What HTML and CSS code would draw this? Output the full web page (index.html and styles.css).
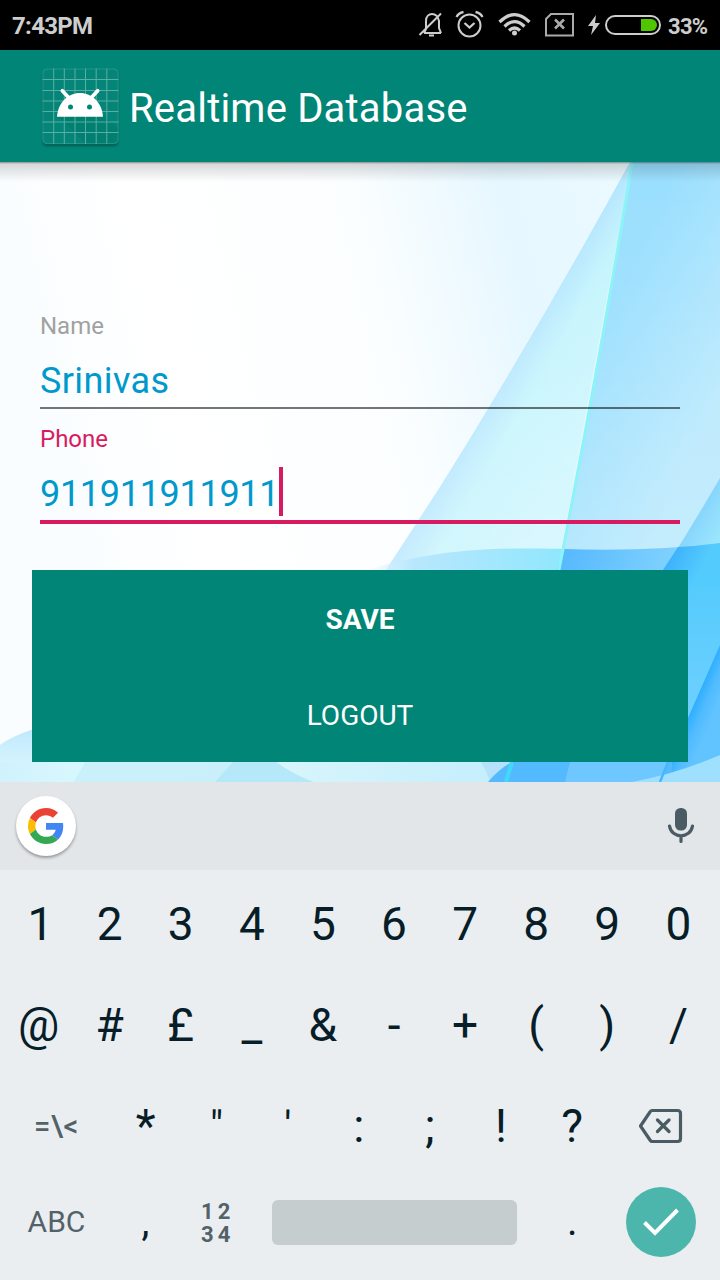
FILE: index.html
```html
<!DOCTYPE html>
<html lang="en">
<head>
<meta charset="utf-8">
<title>Realtime Database</title>
<link rel="stylesheet" href="styles.css">
</head>
<body>
<div class="status">
  <span class="clock">7:43PM</span>
  <svg class="status-icons" width="244" height="50" viewBox="418 0 244 50" fill="none" stroke="#cdcdcd" stroke-width="2">
    <path d="M424 33h17M424 33l2-4v-8c0-5 3-7 6-7s6 2 7 7v7l2 5M419.500 35L441 13.500M429 35.500h5"/>
    <circle cx="469.500" cy="25.500" r="11"/>
    <path d="M456.500 17q2-4 7-5M482.500 17q-2-4-7-5M464.500 23l5 4.500 5-4.500" stroke-width="2.300"/>
    <g stroke-width="3.200"><path d="M499.500 22q15-15 30 0M504.500 26.500q10-10 20 0M509 30.500q5.500-5 11 0"/></g>
    <circle cx="514.500" cy="33" r="2.500" fill="#cdcdcd" stroke="none"/>
    <path d="M551 14h22v21.500h-27V19z" stroke="#aaa"/>
    <path d="M555 19.500l9 9M564 19.500l-9 9" stroke="#aaa" stroke-width="2.600"/>
    <path d="M596 15l-8 11h5l-2 9 9-12h-5z" fill="#cdcdcd" stroke="none"/>
    <rect x="606" y="16" width="54" height="18" rx="9"/>
    <path d="M641 19h10a6 6 0 0 1 0 12h-10z" fill="#4fc700" stroke="none"/>
  </svg>
  <span class="percent">33%</span>
</div>
<header class="appbar">
  <svg class="launcher" width="84" height="84" viewBox="38 65 84 84">
    <defs><clipPath id="tile"><rect x="42.500" y="68.500" width="76" height="75.500" rx="4"/></clipPath></defs>
    <rect class="tile-shadow" x="43" y="70" width="75" height="75" rx="4"/>
    <rect x="42.500" y="68.500" width="76" height="75.500" rx="4" fill="#048577"/>
    <path d="M58 116l28 28h32v-16l-15-13z" fill="#007a6c" opacity=".55" clip-path="url(#tile)"/>
    <path clip-path="url(#tile)" d="M53.700 68v76M64.300 68v76M75 68v76M85.500 68v76M96.200 68v76M106.800 68v76M42 79.500h77M42 90.500h77M42 101h77M42 111.500h77M42 122h77M42 132.500h77" stroke="#77bdb3" stroke-width="1" opacity=".75"/>
    <rect x="43" y="69" width="75" height="74.500" rx="4" fill="none" stroke="#58aaa0" stroke-width=".7" opacity=".6"/>
    <path d="M57 116.700c1-14 11-23.700 23-23.700s22 9.700 23 23.700z" fill="#fff"/>
    <path d="M62.300 90.800l7 7.500M97.700 90.800l-7 7.500" stroke="#fff" stroke-width="3.700" stroke-linecap="round"/>
    <circle cx="70.500" cy="107" r="2.500" fill="#008577"/><circle cx="89.500" cy="107" r="2.500" fill="#008577"/>
  </svg>
  <h1 class="title">Realtime Database</h1>
</header>
<main class="screen">
  <svg class="wallpaper" width="720" height="620" viewBox="0 162 720 620">
    <defs>
      <linearGradient id="sky" x1="0" x2="1" y1=".2" y2="0"><stop offset="0" stop-color="#f9fdff"/><stop offset=".2" stop-color="#fff"/><stop offset=".5" stop-color="#fbfeff"/><stop offset=".7" stop-color="#e6f7ff"/><stop offset="1" stop-color="#eefcff"/></linearGradient>
      <linearGradient id="sail" gradientUnits="userSpaceOnUse" x1="495" y1="390" x2="590" y2="445"><stop offset="0" stop-color="#b4e5fe"/><stop offset=".3" stop-color="#c3f4fd"/><stop offset="1" stop-color="#ccf5fe"/></linearGradient>
      <linearGradient id="sailfade" x1="0" x2="0" y1="0" y2="1"><stop offset="0" stop-color="#fff" stop-opacity="0"/><stop offset="1" stop-color="#fff" stop-opacity=".3"/></linearGradient>
      <linearGradient id="right" gradientUnits="userSpaceOnUse" x1="595" y1="340" x2="720" y2="400"><stop offset="0" stop-color="#9adffe"/><stop offset="1" stop-color="#b9e9fd"/></linearGradient>
      <linearGradient id="rightfade" x1="0" x2="0" y1="0" y2="1"><stop offset="0" stop-color="#fff" stop-opacity="0"/><stop offset="1" stop-color="#fff" stop-opacity=".16"/></linearGradient>
      <linearGradient id="corner" gradientUnits="userSpaceOnUse" x1="692" y1="520" x2="720" y2="537"><stop offset="0" stop-color="#86d4fd"/><stop offset="1" stop-color="#9be6fd"/></linearGradient>
      <linearGradient id="wave" gradientUnits="userSpaceOnUse" x1="360" x2="570" y1="0" y2="0"><stop offset="0" stop-color="#eefaff" stop-opacity="0"/><stop offset=".25" stop-color="#b9e7fd"/><stop offset="1" stop-color="#8ee7fd"/></linearGradient>
      <linearGradient id="deep" gradientUnits="userSpaceOnUse" x1="550" y1="550" x2="670" y2="600"><stop offset="0" stop-color="#51b5fe"/><stop offset="1" stop-color="#84d5fe"/></linearGradient>
      <linearGradient id="edge" gradientUnits="userSpaceOnUse" x1="670" y1="557" x2="700" y2="572"><stop offset="0" stop-color="#3db2fc"/><stop offset="1" stop-color="#54cbfd"/></linearGradient>
      <linearGradient id="edgefade" x1="0" x2="0" y1="0" y2="1"><stop offset="0" stop-color="#7bd2ff" stop-opacity="0"/><stop offset="1" stop-color="#7bd2ff"/></linearGradient>
      <linearGradient id="fold" gradientUnits="userSpaceOnUse" x1="695" y1="702" x2="716" y2="711"><stop offset="0" stop-color="#2eaeff"/><stop offset=".45" stop-color="#50bbff"/><stop offset="1" stop-color="#62c4ff"/></linearGradient>
      <linearGradient id="foot" x1="0" x2="1" y1="0" y2="0"><stop offset="0" stop-color="#d0f2fd"/><stop offset=".16" stop-color="#d8f8ff"/><stop offset=".5" stop-color="#d9f6fd"/><stop offset="1" stop-color="#c4eefc"/></linearGradient>
      <linearGradient id="hill" x1="0" x2="0" y1="0" y2="1"><stop offset="0" stop-color="#bfe8fd"/><stop offset=".6" stop-color="#d4f4fd"/></linearGradient>
      <linearGradient id="barshade" x1="0" x2="0" y1="0" y2="1"><stop offset="0" stop-color="#000" stop-opacity=".45"/><stop offset=".1" stop-color="#000" stop-opacity=".15"/><stop offset="1" stop-color="#000" stop-opacity="0"/></linearGradient>
    </defs>
    <rect y="162" width="720" height="620" fill="url(#sky)"/>
    <path d="M630 162Q535 335 440 487L386 570l-30 60h190L632 162z" fill="url(#sail)"/>
    <path d="M630 162Q535 335 440 487L386 570l-30 60h190L632 162z" fill="url(#sailfade)"/>
    <path d="M632 162h88v620H500l58-212Q600 360 632 162z" fill="url(#right)"/>
    <path d="M632 162h88v400H560Q600 360 632 162z" fill="url(#rightfade)"/>
    <path d="M720 478q-26 45-56 92h56z" fill="url(#corner)"/>
    <path d="M360 572c60-18 110-26 210-23l-6 35H360z" fill="url(#wave)"/>
    <path d="M563 549q55 2 103-1l54-4v238H500z" fill="url(#deep)"/>
    <path d="M678 547q20-1 42-4v239h-65v-200z" fill="url(#edge)"/>
    <path d="M686 580h34v202h-34z" fill="url(#edgefade)"/>
    <path d="M720 645l-32 73-28 64h60z" fill="url(#fold)"/>
    <path d="M632 163Q600 360 559 570L500 782" fill="none" stroke="#8cf3f7" stroke-width="3"/>
    <path d="M0 745q12-9 34-16v53H0z" fill="url(#hill)"/>
    <path d="M0 762h510v20H0z" fill="url(#foot)"/>
    <path d="M85 762h150l-20 20H74z" fill="#c6edfa" opacity=".8"/>
    <path d="M233 762h43q18 13 38 20h-99z" fill="#b5e8f8"/>
    <path d="M481 762h31l-22 20q-2-8-9-20z" fill="#b6e1fa"/>
    <path d="M488 782q12-14 24-20h160v20z" fill="#53baff"/>
    <path d="M512 762l-6 20" stroke="#40daf7" stroke-width="4"/>
    <path d="M570 762h97l-4 20h-98z" fill="#7dcfff" opacity=".65"/>
    <path d="M632 782q44-8 88-27v27z" fill="#a0e0ff"/>
    <path d="M668 762l-8 20" stroke="#45b7ff" stroke-width="2.500"/>
    <rect y="162" width="720" height="20" fill="url(#barshade)"/>
  </svg>
  <div class="form">
    <label class="label">Name</label>
    <div class="field">Srinivas</div>
    <label class="label active">Phone</label>
    <div class="field focused"><span>911911911911</span><i class="caret"></i></div>
  </div>
  <div class="actions">
    <button class="button save">SAVE</button>
    <button class="button">LOGOUT</button>
  </div>
</main>
<section class="keyboard">
  <div class="suggestions">
    <div class="google">
      <svg width="36" height="36" viewBox="0 0 48 48"><path fill="#EA4335" d="M24 9.500c3.540 0 6.710 1.220 9.210 3.600l6.850-6.850C35.900 2.380 30.470 0 24 0 14.620 0 6.510 5.380 2.560 13.220l7.980 6.190C12.430 13.720 17.740 9.500 24 9.500z"/><path fill="#4285F4" d="M46.980 24.550c0-1.570-.15-3.090-.38-4.550H24v9.020h12.940c-.58 2.960-2.260 5.480-4.780 7.180l7.730 6c4.510-4.180 7.090-10.360 7.090-17.650z"/><path fill="#FBBC05" d="M10.530 28.590A14.500 14.500 0 0 1 9.770 24c0-1.600.27-3.140.76-4.590l-7.980-6.190A23.900 23.900 0 0 0 0 24c0 3.880.92 7.540 2.560 10.780z"/><path fill="#34A853" d="M24 48c6.480 0 11.930-2.130 15.890-5.810l-7.730-6c-2.150 1.450-4.920 2.300-8.160 2.300-6.260 0-11.570-4.220-13.470-9.910l-7.980 6.190C6.510 42.620 14.620 48 24 48z"/></svg>
    </div>
    <svg width="28" height="38" viewBox="667 807 28 38" fill="none" stroke="#4a5b64" stroke-linecap="round"><rect x="675" y="808" width="12" height="22.500" rx="5.500" fill="#4a5b64" stroke="none"/><path d="M669.500 826c2 13 21 13 23 0M681 837v4.500" stroke-width="3.200"/></svg>
  </div>
  <div class="row"><span class="one">1</span><span>2</span><span>3</span><span>4</span><span>5</span><span>6</span><span>7</span><span>8</span><span>9</span><span>0</span></div>
  <div class="row second"><span>@</span><span>#</span><span>£</span><span>_</span><span>&amp;</span><span>-</span><span>+</span><span>(</span><span>)</span><span>/</span></div>
  <div class="row symbols"><span class="wide more">=\&lt;</span><span>*</span><span class="quote">"</span><span class="quote">'</span><span>:</span><span>;</span><span>!</span><span>?</span><span class="wide"><svg width="44" height="36" viewBox="640 1108 44 36" fill="none" stroke="#4a5b64" stroke-width="3.200" stroke-linejoin="round" stroke-linecap="round"><path d="M653 1110.500h25.500q3 0 3 3v25q0 3-3 3H653q-1 0-2-1.500L641.500 1126l9.500-14q1-1.500 2-1.500zM658.500 1120l11.500 11.500M670 1120l-11.500 11.500"/></svg></span></div>
  <div class="row bottom"><span class="wide abc">ABC</span><span class="punct">,</span><span class="numpad">12<br>34</span><span class="space"><i></i></span><span class="punct">.</span><span class="wide"><span class="enter"><svg width="36" height="28" viewBox="0 0 36 28" fill="none" stroke="#fff" stroke-width="4"><path d="M1.500 14.500L12 25 34.500 2"/></svg></span></span></div>
</section>
</body>
</html>
```
FILE: styles.css
```css
* { box-sizing: border-box; }
body { margin: 0; width: 720px; height: 1280px; overflow: hidden; font-family: Roboto, "Noto Sans", sans-serif; }
svg { display: block; flex: none; }
.status { height: 50px; background: #000; color: #cdcdcd; display: flex; align-items: center; padding: 2px 12px 0; font-size: 24px; font-weight: 700; }
.clock { width: 406px; letter-spacing: -0.7px; }
.status-icons { margin-top: -2px; }
.percent { margin-left: 6px; font-size: 22px; letter-spacing: -0.7px; }
.appbar { height: 112px; background: #008577; display: flex; align-items: center; padding-left: 38px; }
.launcher { margin-top: 2px; }
.tile-shadow { fill: #006559; filter: drop-shadow(0 1px 1px #00594f); }
.title { margin: 5px 0 0 7px; color: #fff; font-size: 40px; font-weight: 400; line-height: 48px; letter-spacing: 0.2px; }
.screen { display: grid; grid-template-rows: 408px 212px; height: 620px; }
.wallpaper { grid-area: 1 / 1 / 3 / 2; }
.form { grid-area: 1 / 1; z-index: 1; padding: 149px 40px 0; }
.label { display: block; height: 30px; font-size: 24px; line-height: 30px; color: #a1a1a1; }
.label.active { color: #d81b60; margin-top: 15px; }
.field { height: 68px; padding-top: 19px; border-bottom: 2px solid #0000008a; color: #0099cc; font-size: 36px; line-height: 42px; letter-spacing: 0.4px; display: flex; }
.field.focused { height: 70px; border-bottom: 4px solid #d81b60; letter-spacing: -0.3px; }
.caret { width: 4px; height: 49px; margin: -6px 0 0 -0.6px; background: #d81b60; }
.actions { grid-area: 2 / 1; z-index: 1; margin: 0 32px 20px; display: flex; flex-direction: column; background: #008577; }
.button { flex: 1; border: 0; background: none; color: #fff; font: 400 28px/36px Roboto, sans-serif; padding: 3px 0 0; }
.save { font-weight: 700; }
.keyboard { height: 498px; background: #ebeef1; color: #071d28; }
.suggestions { height: 88px; background: #e3e6e9; display: flex; align-items: center; justify-content: space-between; padding: 0 25px 0 16px; }
.google { width: 60px; height: 60px; border-radius: 50%; background: #fff; box-shadow: 0 2px 3px #0005; display: flex; align-items: center; justify-content: center; }
.row { height: 100px; display: flex; padding: 8px 3px 0; font-size: 46px; line-height: 56px; }
.row > span { flex: 0 0 71.1px; display: flex; justify-content: center; align-items: center; }
.row > .one { padding-left: 4px; }
.second { padding-top: 10px; }
.symbols { padding-top: 12px; }
.row > .wide { flex-basis: 107px; }
.symbols > .more { font-size: 29px; font-weight: 500; color: #526269; letter-spacing: 0.6px; }
.symbols > .quote { font-size: 41px; }
.bottom { padding-top: 4px; }
.bottom > .abc { font-size: 30px; font-weight: 400; color: #526269; }
.bottom > .numpad { display: block; padding: 27px 0 0 20px; font-size: 22px; line-height: 22.5px; letter-spacing: 4px; font-weight: 700; color: #526269; }
.bottom > .space { flex-basis: 284.6px; }
.space i { width: 245px; height: 45px; border-radius: 6px; background: #c6cdcf; }
.bottom > .punct { font-size: 40px; }
.enter { width: 70px; height: 70px; border-radius: 50%; background: #4db6ac; display: flex; align-items: center; justify-content: center; }
```
